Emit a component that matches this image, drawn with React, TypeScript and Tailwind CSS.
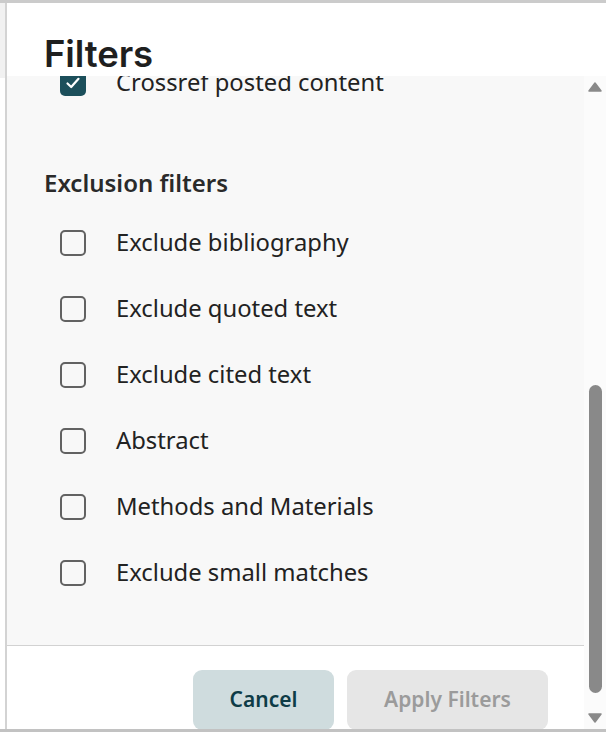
import React from "react";

const items = [
  "Exclude bibliography",
  "Exclude quoted text",
  "Exclude cited text",
  "Abstract",
  "Methods and Materials",
  "Exclude small matches",
];

function Box({ checked }: { checked?: boolean }) {
  if (checked) {
    return (
      <div className="w-[26px] h-[26px] rounded-[5px] bg-[#1c4f5b] flex items-center justify-center shrink-0">
        <svg width="18" height="18" viewBox="0 0 18 18" fill="none">
          <path d="M3.5 9.5 L7.2 13 L14.5 4.8" stroke="white" strokeWidth="2.2" strokeLinecap="round" strokeLinejoin="round" />
        </svg>
      </div>
    );
  }
  return <div className="w-[26px] h-[26px] rounded-[5px] border-[2.5px] border-[#626262] bg-[#f8f8f8] shrink-0" />;
}

function Row({ label, checked }: { label: string; checked?: boolean }) {
  return (
    <div className="h-[66px] flex items-center pl-[53px]">
      <Box checked={checked} />
      <span className="ml-[30px] text-[23.8px] text-[#222222] leading-none">{label}</span>
    </div>
  );
}

export default function App() {
  return (
    <div
      className="w-[606px] h-[732px] flex flex-col bg-white overflow-hidden"
      style={{ fontFamily: '"Noto Sans", "Open Sans", sans-serif' }}
    >
      <div className="h-[3px] bg-[#cbcbcb] shrink-0" />
      <div className="flex flex-1 min-h-0">
        {/* left strip */}
        <div className="w-[5px] flex flex-col shrink-0">
          <div className="h-[75px] bg-[#f1f1f1]" />
          <div className="flex-1 bg-white" />
        </div>
        <div className="w-[2px] bg-[#d3d3d3] shrink-0" />
        {/* main */}
        <div className="flex-1 flex flex-col min-w-0">
          <div className="h-[73px] bg-white shrink-0 pl-[37px] flex items-end pb-[4px]">
            <h1
              className="text-[36.5px] font-semibold text-[#1f1f1f] leading-none tracking-[-0.1px]"
              style={{ fontFamily: 'Inter, "Noto Sans", sans-serif' }}
            >
              Filters
            </h1>
          </div>
          <div className="flex flex-1 min-h-0">
            <div className="flex-1 flex flex-col min-w-0">
              <div className="h-[570px] bg-[#f8f8f8] overflow-hidden shrink-0 border-b border-[#d2d2d2]">
                <div className="-mt-[26px]">
                  <Row label="Crossref posted content" checked />
                  <div className="pl-[37px] pt-[52px] pb-[12px] text-[24px] font-semibold text-[#2a2a2a] leading-[30px]">
                    Exclusion filters
                  </div>
                  {items.map((l) => (
                    <Row key={l} label={l} />
                  ))}
                </div>
              </div>
              <div className="flex-1 bg-white flex justify-end items-start pt-[24px] pr-[36px] gap-[13px]">
                <button className="w-[141px] h-[60px] rounded-[9px] bg-[#cfdcde] text-[#0e3c47] text-[21px] font-semibold">
                  Cancel
                </button>
                <button className="w-[201px] h-[60px] rounded-[9px] bg-[#e6e6e6] text-[#9b9b9b] text-[21px] font-semibold">
                  Apply Filters
                </button>
              </div>
            </div>
            {/* scrollbar */}
            <div className="w-[22px] bg-[#fbfbfb] shrink-0 flex flex-col items-center">
              <svg width="14" height="10" viewBox="0 0 14 10" className="mt-[6px]">
                <path d="M7 1 L13 9 L1 9 Z" fill="#8a8a8a" stroke="#8a8a8a" strokeWidth="1.5" strokeLinejoin="round" />
              </svg>
              <div className="flex-1 w-full flex flex-col items-center pt-[293px] pb-[20px]">
                <div className="w-[13px] flex-1 rounded-full bg-[#898989]" />
              </div>
              <svg width="14" height="10" viewBox="0 0 14 10" className="mb-[6px]">
                <path d="M1 1 L13 1 L7 9 Z" fill="#8a8a8a" stroke="#8a8a8a" strokeWidth="1.5" strokeLinejoin="round" />
              </svg>
            </div>
          </div>
        </div>
      </div>
      <div className="h-[3px] bg-[#c2c2c2] shrink-0" />
    </div>
  );
}
